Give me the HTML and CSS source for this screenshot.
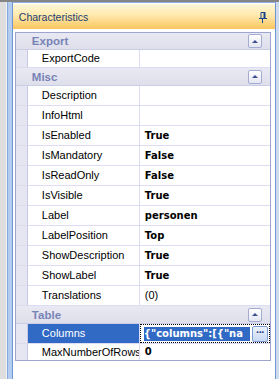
FILE: index.html
```html
<!DOCTYPE html>
<html lang="en">
<head>
  <meta charset="UTF-8">
  <title>Characteristics</title>
  <link rel="stylesheet" href="styles.css">
</head>
<body>
  <div class="frame">
    <div class="side"></div>
    <div class="splitter"></div>

    <div class="panel">
      <div class="caption">
        <span>Characteristics</span>
        <!-- pin -->
        <svg class="pin" width="8" height="11" viewBox="0 0 8 11">
          <path d="M2 0.5h3.5v6h-3.5z" fill="none" stroke="#15428b"/>
          <rect x="4.5" y="0" width="2" height="7" fill="#15428b"/>
          <rect x="0" y="6" width="8" height="1" fill="#15428b"/>
          <rect x="3" y="7" width="1" height="4" fill="#15428b"/>
        </svg>
      </div>

      <div class="grid">
        <div class="cat first"><span>Export</span><span class="fold"><i></i></span></div>
        <div class="prop short"><div class="gut"></div><div class="name">ExportCode</div><div class="value"></div></div>

        <div class="cat"><span>Misc</span><span class="fold"><i></i></span></div>
        <div class="prop"><div class="gut"></div><div class="name">Description</div><div class="value"></div></div>
        <div class="prop"><div class="gut"></div><div class="name">InfoHtml</div><div class="value"></div></div>
        <div class="prop"><div class="gut"></div><div class="name">IsEnabled</div><div class="value b">True</div></div>
        <div class="prop"><div class="gut"></div><div class="name">IsMandatory</div><div class="value b">False</div></div>
        <div class="prop"><div class="gut"></div><div class="name">IsReadOnly</div><div class="value b">False</div></div>
        <div class="prop"><div class="gut"></div><div class="name">IsVisible</div><div class="value b">True</div></div>
        <div class="prop"><div class="gut"></div><div class="name">Label</div><div class="value b">personen</div></div>
        <div class="prop"><div class="gut"></div><div class="name">LabelPosition</div><div class="value b">Top</div></div>
        <div class="prop"><div class="gut"></div><div class="name">ShowDescription</div><div class="value b">True</div></div>
        <div class="prop"><div class="gut"></div><div class="name">ShowLabel</div><div class="value b">True</div></div>
        <div class="prop"><div class="gut"></div><div class="name">Translations</div><div class="value">(0)</div></div>

        <div class="cat"><span>Table</span><span class="fold"><i></i></span></div>
        <div class="prop selected">
          <div class="gut"></div>
          <div class="name">Columns</div>
          <div class="value">
            <div class="edit">
              <span class="sel">{"columns":[{"na</span>
              <span class="more">&middot;&middot;&middot;</span>
            </div>
          </div>
        </div>
        <div class="prop last"><div class="gut"></div><div class="name">MaxNumberOfRows</div><div class="value b">0</div></div>
      </div>
    </div>

    <div class="edge"></div>
  </div>
</body>
</html>
```

FILE: styles.css
```css
html, body {
  margin: 0;
  padding: 0;
  height: 100%;
}
body {
  font-family: "Liberation Sans", Tahoma, sans-serif;
  font-size: 11px;
  color: #000;
  background: #fff;
}
.frame {
  display: flex;
  height: 379px;
  border-top: 2px solid #858585;
  box-sizing: border-box;
}
.side {
  width: 6px;
  background: #dedede;
  border-right: 1px solid #f4f4f4;
}
.splitter {
  width: 4px;
  background: #b3cdf0;
  border-left: 1px solid #86a8dc;
  border-right: 1px solid #7096d3;
}
.panel {
  width: 260px;
  padding: 1px 4px 0 2px;
  border-right: 1px solid #6f95d2;
  background: #fff;
  border-top: 1px solid #8eaee0;
}
.edge {
  width: 3px;
  background: #cfdcef;
}

/* caption */
.caption {
  height: 25px;
  margin-left: -2px;
  margin-right: -4px;
  padding: 0 8px 0 6px;
  display: flex;
  align-items: center;
  justify-content: space-between;
  background: linear-gradient(#fff7da, #ffe9ad 45%, #fcd27a 80%, #f9c55f);
  color: #1b3c70;
  font-size: 10.5px;
}
.pin { margin-top: 1px; }

/* property grid */
.grid {
  margin-top: 3px;
  border: 1px solid #9ea6cf;
  background: #fff;
}
.cat {
  height: 17px;
  border-bottom: 1px solid #c9cde6;
  background: linear-gradient(#e9e9f3, #dfdfec);
  display: flex;
  align-items: center;
  justify-content: space-between;
  padding: 0 8px 0 16px;
  font-weight: bold;
  color: #7883b6;
  font-size: 11.5px;
}
.cat.first { height: 16px; }
.fold {
  width: 12px;
  height: 12px;
  border: 1px solid #a4acd2;
  border-radius: 2px;
  background: linear-gradient(#ffffff, #e4e6f3);
  display: flex;
  align-items: center;
  justify-content: center;
}
.fold i {
  width: 0;
  height: 0;
  border-left: 3px solid transparent;
  border-right: 3px solid transparent;
  border-bottom: 3px solid #3e4f8e;
}
.prop {
  display: grid;
  grid-template-columns: 12px 112px 1fr;
  height: 20px;
}
.prop.short { height: 18px; }
.prop.last { height: 16px; }
.gut {
  background: #e6e6f2;
  border-right: 1px solid #c5c9e4;
  border-bottom: 1px solid #dcdcee;
}
.name {
  padding-left: 14px;
  line-height: 19px;
  border-right: 1px solid #dcdcf4;
  border-bottom: 1px solid #dcdcf4;
  white-space: nowrap;
  overflow: hidden;
}
.value {
  padding-left: 5px;
  line-height: 19px;
  border-bottom: 1px solid #dcdcf4;
  white-space: nowrap;
  overflow: hidden;
}
.short .name, .short .value { line-height: 17px; }
.b {
  font-family: "DejaVu Sans", sans-serif;
  font-size: 10px;
  font-weight: bold;
}
.last .gut,
.last .name,
.last .value { border-bottom: none; line-height: 16px; }

/* selected row */
.selected .name {
  background: #316ac5;
  color: #fff;
}
.selected .value { padding: 0; }
.edit {
  height: 17px;
  border: 1px dotted #000;
  display: flex;
  align-items: center;
  padding-left: 3px;
  overflow: hidden;
}
.sel {
  flex: 1;
  background: #316ac5;
  color: #fff;
  font-family: "DejaVu Sans", sans-serif;
  font-size: 10px;
  font-weight: bold;
  line-height: 14px;
  white-space: nowrap;
  overflow: hidden;
}
.more {
  flex: none;
  width: 14px;
  height: 14px;
  margin: 0 1px 0 2px;
  border: 1px solid #7f9cd0;
  border-radius: 2px;
  background: linear-gradient(#eef3fd, #c6d7f4);
  color: #1d3c78;
  font-weight: bold;
  line-height: 10px;
  text-align: center;
  letter-spacing: -1px;
}
```
